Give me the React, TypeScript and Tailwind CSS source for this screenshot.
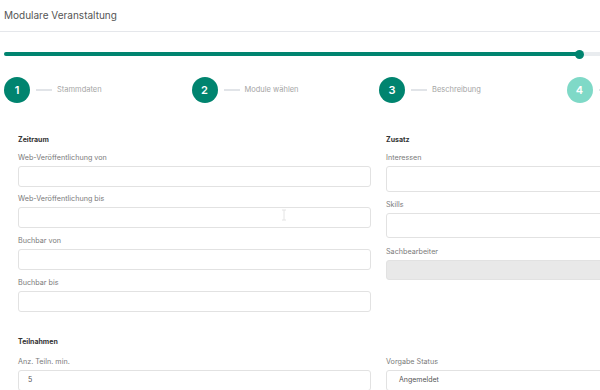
import React from 'react'

const steps = [
  { n: 1, label: 'Stammdaten', done: true },
  { n: 2, label: 'Module wählen', done: true },
  { n: 3, label: 'Beschreibung', done: true },
  { n: 4, label: '', done: false },
]

const Field: React.FC<{
  label: string
  h?: string
  value?: string
  disabled?: boolean
  pad?: string
  className?: string
}> = ({ label, h = 'h-[21px]', value, disabled, pad = 'pl-[9px]', className = '' }) => (
  <div className={className}>
    <div className="text-[7.2px] leading-[10px] text-[#7a7a7a] mt-[1px] mb-[3px]">{label}</div>
    <div
      className={`${h} ${pad} w-full rounded-[3px] border border-[#e2e2e2] flex items-center text-[7px] text-[#555] ${
        disabled ? 'bg-[#e9e9e9]' : 'bg-white'
      }`}
    >
      {value}
    </div>
  </div>
)

export default function App() {
  return (
    <div className="w-[600px] h-[390px] overflow-hidden bg-white font-['Inter',sans-serif]">
      <div className="w-[760px]">
        <div className="h-[32px] border-b border-[#e5e7eb] pl-[4px] flex items-center text-[10px] text-[#555]">
          Modulare Veranstaltung
        </div>

        <div className="mt-[20px] ml-[4px] mr-[4px] h-[4px] rounded-full bg-[#e9ecef] relative">
          <div className="absolute left-0 top-0 h-[4px] w-[576px] rounded-full bg-[#00846f]" />
          <div className="absolute left-[571px] top-[-2.5px] w-[9px] h-[9px] rounded-full bg-[#00846f]" />
        </div>

        <div className="mt-[21px] ml-[4px] flex">
          {steps.map((s) => (
            <div key={s.n} className="w-[187.5px] flex items-center shrink-0">
              <div
                className={`w-[26px] h-[26px] rounded-full flex items-center justify-center text-white text-[11px] font-semibold ${
                  s.done ? 'bg-[#00846f]' : 'bg-[#7fd9c7]'
                }`}
              >
                {s.n}
              </div>
              <div className="ml-[6px] w-[16px] h-[2px] bg-[#e1e4e8]" />
              {s.label && <div className="ml-[5px] text-[7.5px] text-[#a5a5a5]">{s.label}</div>}
            </div>
          ))}
        </div>

        <div className="px-[18px] mt-[32px] grid grid-cols-[353px_353px] gap-x-[15px]">
          <div className="flex flex-col">
            <div className="text-[7px] leading-[10px] font-bold text-[#333] mb-[7px]">Zeitraum</div>
            <Field label="Web-Veröffentlichung von" />
            <div className="relative">
              <Field label="Web-Veröffentlichung bis" className="mt-[7px]" />
              <svg className="absolute left-[263px] top-[22px]" width="6" height="12" viewBox="0 0 6 12">
                <path d="M1 1h4M3 1v10M1 11h4" stroke="#e4e4e4" strokeWidth="1" fill="none" />
              </svg>
            </div>
            <Field label="Buchbar von" className="mt-[7px]" />
            <Field label="Buchbar bis" className="mt-[7px]" />
          </div>
          <div className="flex flex-col">
            <div className="text-[7px] leading-[10px] font-bold text-[#333] mb-[7px]">Zusatz</div>
            <Field label="Interessen" h="h-[26px]" />
            <Field label="Skills" h="h-[25px]" className="mt-[7px]" />
            <Field label="Sachbearbeiter" h="h-[20px]" disabled className="mt-[8px]" />
          </div>
        </div>

        <div className="px-[18px] mt-[25px]">
          <div className="text-[7px] leading-[10px] font-bold text-[#333] mb-[9px]">Teilnahmen</div>
          <div className="grid grid-cols-[353px_353px] gap-x-[15px]">
            <Field label="Anz. Teiln. min." value="5" />
            <Field label="Vorgabe Status" value="Angemeldet" pad="pl-[12px]" />
          </div>
        </div>
      </div>
    </div>
  )
}
